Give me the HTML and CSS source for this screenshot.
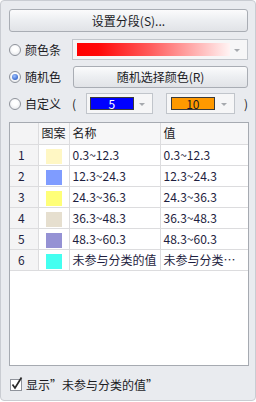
FILE: index.html
```html
<!DOCTYPE html>
<html>
<head>
<meta charset="utf-8">
<link rel="stylesheet" href="styles.css">
</head>
<body>
<div class="panel">
  <button class="btn btn-top">设置分段(S)...</button>

  <div class="row row-ramp">
    <label class="opt"><span class="radio"></span>颜色条</label>
    <div class="combo combo-ramp">
      <div class="ramp"></div>
      <span class="arrow"></span>
    </div>
  </div>

  <div class="row row-random">
    <label class="opt"><span class="radio checked"></span>随机色</label>
    <button class="btn btn-random">随机选择颜色(R)</button>
  </div>

  <div class="row row-custom">
    <label class="opt"><span class="radio"></span>自定义</label>
    <span class="paren paren-open">(</span>
    <div class="combo combo-color c1">
      <div class="chip chip-blue">5</div>
      <span class="arrow"></span>
    </div>
    <div class="combo combo-color c2">
      <div class="chip chip-orange">10</div>
      <span class="arrow"></span>
    </div>
    <span class="paren paren-close">)</span>
  </div>

  <div class="grid-box">
    <table class="grid">
      <colgroup>
        <col class="c-idx"><col class="c-sw"><col class="c-name"><col class="c-val">
      </colgroup>
      <thead>
        <tr><th class="idx"></th><th class="sw-h">图案</th><th>名称</th><th>值</th></tr>
      </thead>
      <tbody>
        <tr><td class="idx">1</td><td class="sw"><span class="swatch s1"></span></td><td>0.3~12.3</td><td>0.3~12.3</td></tr>
        <tr><td class="idx">2</td><td class="sw"><span class="swatch s2"></span></td><td>12.3~24.3</td><td>12.3~24.3</td></tr>
        <tr><td class="idx">3</td><td class="sw"><span class="swatch s3"></span></td><td>24.3~36.3</td><td>24.3~36.3</td></tr>
        <tr><td class="idx">4</td><td class="sw"><span class="swatch s4"></span></td><td>36.3~48.3</td><td>36.3~48.3</td></tr>
        <tr><td class="idx">5</td><td class="sw"><span class="swatch s5"></span></td><td>48.3~60.3</td><td>48.3~60.3</td></tr>
        <tr><td class="idx">6</td><td class="sw"><span class="swatch s6"></span></td><td>未参与分类的值</td><td class="ell">未参与分类的值</td></tr>
      </tbody>
    </table>
  </div>

  <label class="check-row">
    <span class="checkbox">
      <svg width="14" height="15" viewBox="0 0 14 15"><path d="M2.5 8.5 L5 12 L11.5 1.5" fill="none" stroke="#2a2a2a" stroke-width="1.7"/></svg>
    </span>
    显示”未参与分类的值”
  </label>
</div>
</body>
</html>
```

FILE: styles.css
```css
* { box-sizing: border-box; }
html, body { margin: 0; padding: 0; }
body {
  width: 256px;
  height: 402px;
  font-family: "Noto Sans CJK SC", "Noto Sans", sans-serif;
  font-size: 12px;
  color: #1b1b1f;
  background: #ffffff;
}
.panel {
  width: 256px;
  height: 401px;
  border: 1px solid #c9ccd2;
  border-radius: 4px;
  background: #e9ebef;
  padding: 8px 7px 0 8px;
  display: flex;
  flex-direction: column;
}
.btn {
  font-family: inherit;
  font-size: 12px;
  color: #1b1b1f;
  border: 1px solid #a9adb4;
  border-radius: 3px;
  background: linear-gradient(#fbfbfc, #eceef1 50%, #e1e3e7);
  padding: 0;
  line-height: 18px;
}
.btn-top { height: 23px; width: 239px; }
.row {
  display: flex;
  align-items: center;
  height: 21px;
}
.row-ramp { margin-top: 7px; }
.row-random { margin-top: 6px; height: 22px; }
.row-custom { margin-top: 5px; }
.opt {
  display: flex;
  align-items: center;
  width: 63px;
  flex: none;
  line-height: 16px;
}
.radio {
  width: 12px;
  height: 12px;
  border-radius: 50%;
  border: 1px solid #8f939b;
  background: radial-gradient(circle at 50% 40%, #ffffff 30%, #dfe1e6 100%);
  margin-right: 4px;
  position: relative;
  flex: none;
}
.radio.checked::after {
  content: "";
  position: absolute;
  left: 2px; top: 2px;
  width: 6px; height: 6px;
  border-radius: 50%;
  background: radial-gradient(circle at 40% 35%, #9fc2ff, #2d5fc8 80%);
}
.combo {
  height: 21px;
  border: 1px solid #c1c5cb;
  background: #f6f6f7;
  display: flex;
  align-items: center;
  position: relative;
}
.combo-ramp { width: 177px; padding-left: 4px; }
.ramp {
  width: 153px;
  height: 13px;
  background: linear-gradient(to right, #ff0000 0%, #ff0808 14%, #ff3030 30%, #ff5c5c 48%, #ff9090 66%, #ffc4c4 84%, #fff4f4 100%);
}
.arrow {
  position: absolute;
  right: 7px;
  top: 9px;
  width: 0; height: 0;
  border-left: 3px solid transparent;
  border-right: 3px solid transparent;
  border-top: 3px solid #a6a9ae;
}
.btn-random { width: 176px; height: 22px; margin-left: 1px; }
.paren { color: #1b1b1f; line-height: 16px; }
.paren-open { width: 14px; margin-left: 0; }
.combo-color { padding-left: 3px; }
.c1 { width: 68px; }
.c2 { width: 70px; margin-left: 13px; padding-left: 4px; }
.paren-close { margin-left: 9px; }
.chip {
  width: 44px;
  height: 13px;
  border: 1px solid #3a3a3a;
  font-size: 12px;
  line-height: 11px;
  text-align: center;
}
.chip-blue { background: #0000ff; color: #ffffff; }
.chip-orange { background: #ff9900; color: #1b1b1f; }
.grid-box {
  margin-top: 8px;
  width: 240px;
  height: 244px;
  background: #ffffff;
  border: 1px solid #a6aab1;
}
.grid {
  border-collapse: collapse;
  table-layout: fixed;
  width: 238px;
}
.c-idx { width: 28px; }
.c-sw { width: 31px; }
.c-name { width: 91px; }
.c-val { width: 88px; }
.grid th, .grid td {
  height: 21px;
  padding: 0 0 0 3px;
  border: 1px solid #dcdcde;
  border-top: none;
  text-align: left;
  font-weight: normal;
  white-space: nowrap;
  overflow: hidden;
  line-height: 18px;
  color: #1e1e40;
}
.grid tr > *:first-child { border-left: none; }
.grid tr > *:last-child { border-right: none; }
.grid th { background: #f7f7f8; color: #1b1b1f; }
.grid th.sw-h { padding-left: 3px; }
.grid td.idx, .grid th.idx { background: #f4f4f5; padding-left: 8px; }
.grid td.sw { padding: 0; text-align: center; }
.swatch {
  display: inline-block;
  width: 16px;
  height: 15px;
  vertical-align: middle;
}
.s1 { background: #fff7c4; }
.s2 { background: #7f9cff; }
.s3 { background: #ffff78; }
.s4 { background: #e6dfcf; }
.s5 { background: #9592d4; }
.s6 { background: #44fff0; }
.grid td.ell { text-overflow: ellipsis; padding-right: 6px; }
.check-row {
  display: flex;
  align-items: center;
  margin-top: 11px;
  line-height: 16px;
}
.checkbox {
  width: 12px;
  height: 12px;
  border: 1px solid #8f939b;
  background: #ffffff;
  margin: 0 4px 0 1px;
  position: relative;
}
.checkbox svg { position: absolute; left: -1px; top: -4px; }
```
